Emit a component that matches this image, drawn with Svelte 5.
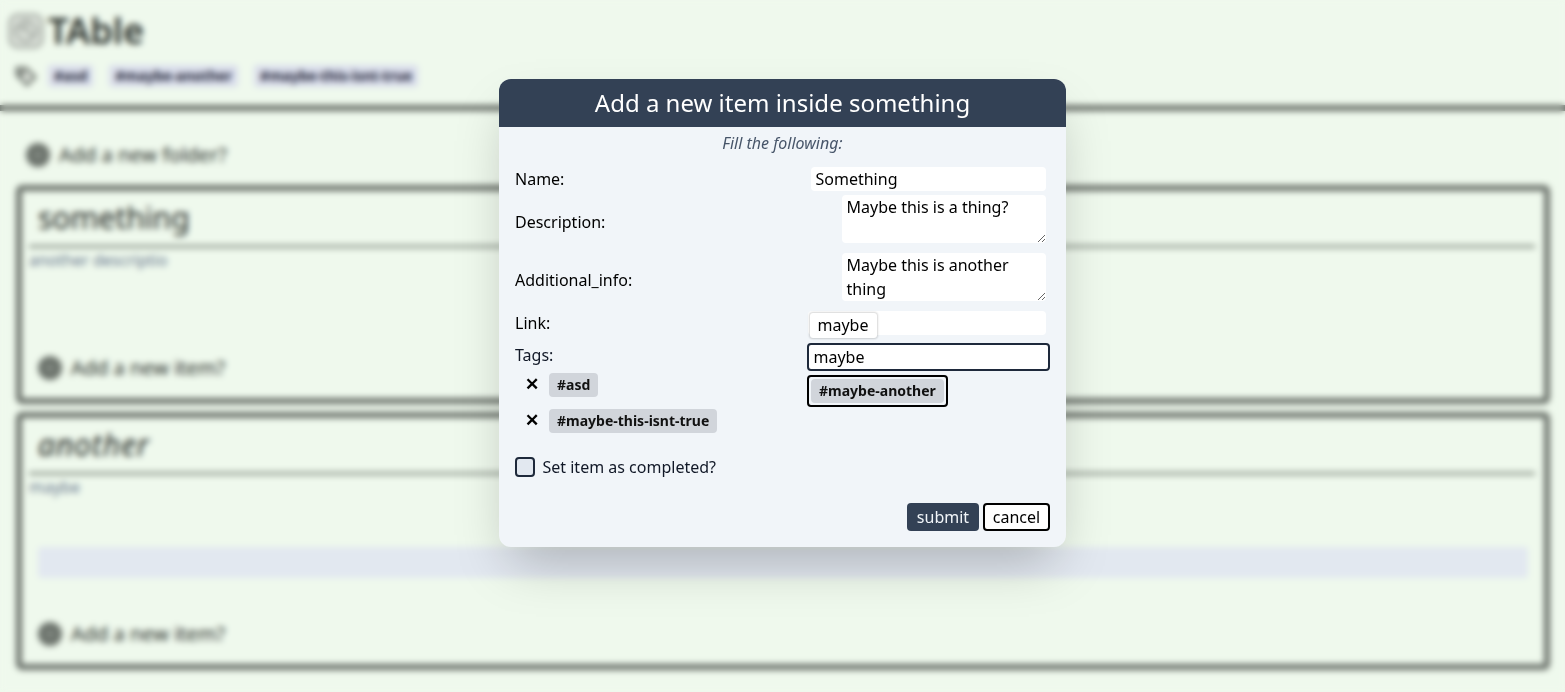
<script>
  const tags = ['#asd', '#maybe-another', '#maybe-this-isnt-true'];
</script>

<div class="page">
  <header class="top">
    <div class="brand">
      <svg class="logo" viewBox="0 0 36 36" fill="none" stroke="#a3a9a2" stroke-width="3">
        <rect x="2" y="2" width="32" height="32" rx="8" fill="#e2e8e0" />
        <circle cx="18" cy="18" r="10" />
        <path d="M9 13l18 10M18 8v10" />
      </svg>
      <h1>TAble</h1>
    </div>
    <div class="tagbar">
      <svg class="tagicon" viewBox="0 0 24 24" fill="#e4e9e1" stroke="#5f665f" stroke-width="2.6">
        <path d="M3 4h9l9 9-8 8-10-10z" />
        <circle cx="8" cy="9" r="1.5" />
      </svg>
      {#each tags as tag}
        <span class="bgtag">{tag}</span>
      {/each}
    </div>
  </header>

  <main class="content">
    <div class="add add-folder">
      <svg class="dot" viewBox="0 0 24 24">
        <circle cx="12" cy="12" r="12" fill="#6a716a" />
        <path d="M12 6v12M6 12h12" stroke="#8c938c" stroke-width="2" />
      </svg>
      <span>Add a new folder?</span>
    </div>

    <section class="card first">
      <h2>something</h2>
      <p>another descriptio</p>
      <div class="add add-item">
        <svg class="dot" viewBox="0 0 24 24">
          <circle cx="12" cy="12" r="12" fill="#6a716a" />
          <path d="M12 6v12M6 12h12" stroke="#8c938c" stroke-width="2" />
        </svg>
        <span>Add a new item?</span>
      </div>
    </section>

    <section class="card second">
      <h2 class="slanted">another</h2>
      <p>maybe</p>
      <div class="bar"></div>
      <div class="add add-item last">
        <svg class="dot" viewBox="0 0 24 24">
          <circle cx="12" cy="12" r="12" fill="#6a716a" />
          <path d="M12 6v12M6 12h12" stroke="#8c938c" stroke-width="2" />
        </svg>
        <span>Add a new item?</span>
      </div>
    </section>
  </main>
</div>

<div class="overlay">
  <div class="modal">
    <div class="title">Add a new item inside something</div>
    <div class="body">
      <p class="hint">Fill the following:</p>

      <div class="row r-name">
        <label for="f-name">Name:</label>
        <input id="f-name" class="field name" value="Something" />
      </div>
      <div class="row r-desc">
        <label for="f-desc" class="low">Description:</label>
        <textarea id="f-desc" class="field area">Maybe this is a thing?</textarea>
      </div>
      <div class="row r-info">
        <label for="f-info" class="low">Additional_info:</label>
        <textarea id="f-info" class="field area">Maybe this is another thing</textarea>
      </div>
      <div class="row r-link">
        <label for="f-link">Link:</label>
        <div class="linkwrap">
          <input id="f-link" class="field link" />
          <span class="suggest">maybe</span>
        </div>
      </div>

      <div class="tagsec">
        <div class="tagleft">
          <span class="tagslabel">Tags:</span>
          <div class="chosen"><span class="x">✕</span><span class="chip">#asd</span></div>
          <div class="chosen"><span class="x">✕</span><span class="chip">#maybe-this-isnt-true</span></div>
        </div>
        <div class="tagright">
          <input class="taginput" value="maybe" />
          <div class="option"><span class="chip">#maybe-another</span></div>
        </div>
      </div>

      <div class="check">
        <span class="box"></span>
        <span>Set item as completed?</span>
      </div>

      <div class="actions">
        <button class="submit">submit</button>
        <button class="cancel">cancel</button>
      </div>
    </div>
  </div>
</div>

<style>
  :global(body) {
    margin: 0;
    background: #eff9ed;
    font-family: "Noto Sans", sans-serif;
    overflow: hidden;
  }
  .page {
    height: 692px;
    box-sizing: border-box;
    color: #1f2937;
    background: #eff9ed;
  }
  .top {
    height: 111px;
    box-sizing: border-box;
    border-bottom: 6px solid #6a716a;
    padding: 12px 8px 0;
  }
  .brand {
    display: flex;
    align-items: center;
    gap: 4px;
    height: 38px;
  }
  .logo { width: 36px; height: 36px; flex: none; }
  h1 {
    margin: 0;
    font-size: 36px;
    line-height: 36px;
    font-weight: 600;
    color: #2a302b;
  }
  .tagbar {
    display: flex;
    align-items: center;
    margin-top: 14px;
    padding-left: 6px;
    height: 24px;
  }
  .tagicon { width: 24px; height: 24px; margin-right: 10px; }
  .bgtag {
    background: #dadeec;
    color: #1a2033;
    font-weight: 700;
    font-size: 14px;
    line-height: 22px;
    padding: 0 6px;
    border-radius: 3px;
    margin-right: 16px;
  }
  .content { padding: 32px 16px 0; }
  .add {
    display: flex;
    align-items: center;
    gap: 9px;
    color: #262c27;
    font-size: 20px;
    line-height: 24px;
  }
  .add-folder { margin-left: 10px; height: 24px; margin-bottom: 18px; }
  .dot {
    width: 24px;
    height: 24px;
    flex: none;
  }
  .card {
    box-sizing: border-box;
    border: 6px solid #6a716a;
    border-radius: 6px;
    width: 1534px;
    padding: 7px 9px 0 7px;
    margin-bottom: 8px;
  }
  .first { height: 219px; }
  .second { height: 258px; }
  h2 {
    margin: 0 0 0 9px;
    font-size: 30px;
    line-height: 40px;
    font-weight: 400;
    color: #1a1f1b;
  }
  .slanted { font-style: italic; letter-spacing: 0.85px; }
  .card p {
    margin: 7px 0 0;
    border-top: 3px solid #879187;
    font-size: 16px;
    line-height: 24px;
    color: #64748b;
  }
  .add-item { margin-left: 9px; }
  .first .add-item { margin-top: 84px; }
  .bar {
    height: 31px;
    background: #e2e8f0;
    border-radius: 3px;
    margin: 48px 7px 0 9px;
  }
  .last { margin-top: 44px; }

  .overlay {
    position: fixed;
    inset: 0;
    display: flex;
    justify-content: center;
    align-items: flex-start;
    padding-top: 79px;
    box-sizing: border-box;
    backdrop-filter: blur(3px);
    color: #000;
  }
  .modal {
    width: 567px;
    height: 468px;
    border-radius: 12px;
    overflow: hidden;
    background: #f1f5f9;
    box-shadow: 0 25px 50px -12px rgba(0, 0, 0, 0.25);
  }
  .title {
    height: 48px;
    background: #334155;
    color: #fff;
    font-size: 24px;
    line-height: 48px;
    text-align: center;
  }
  .body { padding: 0 16px; }
  .hint {
    margin: 0;
    text-align: center;
    font-style: italic;
    font-size: 16px;
    line-height: 24px;
    height: 28px;
    padding-top: 4px;
    box-sizing: border-box;
    color: #475569;
  }
  .row {
    display: flex;
    align-items: center;
    justify-content: space-between;
    font-size: 16px;
    line-height: 24px;
    padding-right: 4px;
  }
  .row label { display: block; }
  .row .low { margin-top: 6px; }
  .r-name { margin-top: 12px; }
  .r-desc { margin-top: 4px; }
  .r-info { margin-top: 10px; }
  .r-link { margin-top: 10px; }
  .field {
    box-sizing: border-box;
    border: 0;
    outline: 0;
    background: #fff;
    border-radius: 4px;
    font: 16px/24px "Noto Sans", sans-serif;
    color: #000;
    margin: 0;
    display: block;
  }
  .name { width: 235px; height: 24px; padding: 0 4.5px; }
  .area { width: 204px; height: 48px; padding: 0 4.5px; }
  .linkwrap { position: relative; width: 238px; height: 24px; }
  .link { width: 238px; height: 24px; }
  .suggest {
    position: absolute;
    left: 2px;
    top: 2px;
    width: 67px;
    height: 25px;
    box-sizing: border-box;
    padding-left: 7.5px;
    line-height: 24px;
    background: #fff;
    border-radius: 3px;
    box-shadow: 0 0 2px 1px rgba(0, 0, 0, 0.16);
  }
  .tagsec {
    display: flex;
    justify-content: space-between;
    margin-top: 8px;
    font-size: 16px;
  }
  .tagleft { display: flex; flex-direction: column; }
  .tagslabel { line-height: 24px; margin-bottom: 6px; color: #111827; }
  .chosen {
    display: flex;
    align-items: center;
    height: 24px;
    margin-bottom: 12px;
    padding-left: 10px;
  }
  .x { width: 24px; font-size: 17px; font-weight: 700; line-height: 24px; margin-top: -2px; }
  .chip {
    display: inline-block;
    background: #d1d5db;
    color: #111;
    font-size: 14px;
    font-weight: 700;
    line-height: 24px;
    height: 24px;
    padding: 0 8px;
    border-radius: 4px;
  }
  .tagright { width: 243px; display: flex; flex-direction: column; align-items: flex-start; }
  .taginput {
    box-sizing: border-box;
    width: 243px;
    height: 28px;
    border: 2px solid #1e293b;
    border-radius: 4px;
    background: #fff;
    outline: 0;
    padding: 0 4.5px;
    margin: 0;
    font: 16px/24px "Noto Sans", sans-serif;
    color: #000;
  }
  .option {
    margin-top: 4px;
    border: 2px solid #000;
    border-radius: 4px;
    padding: 2px;
    display: flex;
  }
  .check {
    display: flex;
    align-items: center;
    gap: 7.5px;
    font-size: 16px;
    line-height: 24px;
    margin-top: 10px;
    color: #111827;
  }
  .box {
    box-sizing: border-box;
    width: 20px;
    height: 20px;
    border: 2px solid #1e293b;
    border-radius: 4px;
    background: #e2e8f0;
  }
  .actions {
    display: flex;
    justify-content: flex-end;
    gap: 4px;
    margin-top: 24px;
  }
  button {
    box-sizing: border-box;
    height: 28px;
    border-radius: 4px;
    font: 16px/24px "Noto Sans", sans-serif;
    padding: 0;
    margin: 0;
  }
  .submit { width: 72px; background: #334155; color: #f1f5f9; border: 0; }
  .cancel { width: 67px; background: #fff; color: #000; border: 2px solid #000; }
</style>
